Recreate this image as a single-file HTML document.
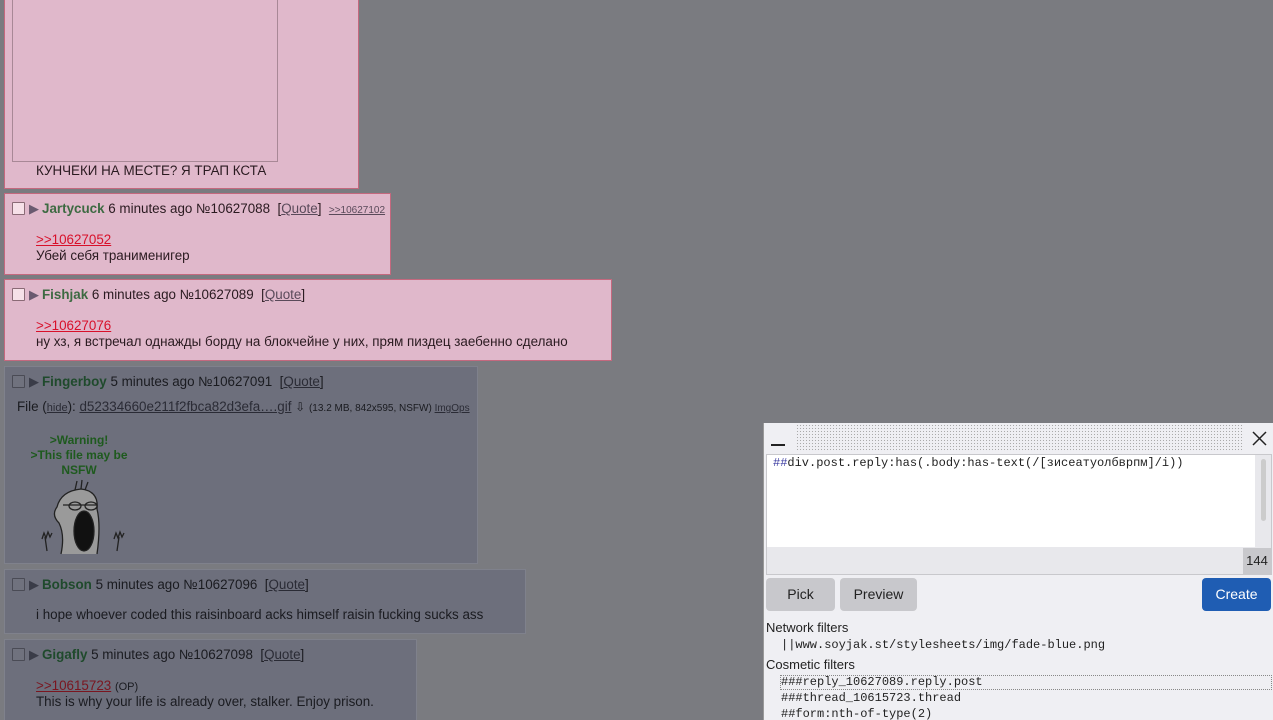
<!DOCTYPE html><html><head><meta charset="utf-8"><style>
html,body{margin:0;width:1273px;height:720px;overflow:hidden}
body{background:#7a7b80;font-family:"Liberation Sans",Arial,sans-serif;font-size:13.4px;position:relative}
.p{position:absolute;box-sizing:border-box}
.pk{background:#e0b8cb;border:1px solid #c4687e;color:#2a1a20}
.gr{background:#6d6f7c;border:1px solid #7f818c;color:#1a1b20}
.h{position:absolute;left:7px;white-space:nowrap}
.cb{display:inline-block;width:11px;height:11px;border:1px solid #8a6a76;vertical-align:-2px;margin-right:4px;background:#f6e0e8;border-radius:1px}
.gr .cb{background:#70727e;border-color:#4a4b55}
.tri{color:#6a5a70;font-size:13px;margin-right:3px}
.gr .tri{color:#3a3c48}
.nm{color:#3d6a42;font-weight:bold}
.gr .nm{color:#1f4a2c}
u{color:#5a4a5a}
.gr u{color:#2a2b35}
.ql{color:#d8102a;text-decoration:underline}
.gr .ql{color:#7a1620}
.t{position:absolute;left:31px;white-space:nowrap}
.mono{font-family:"Liberation Mono",monospace;font-size:12px}
.pn{font-size:13px}
</style></head><body>
<div class="p pk" style="left:4px;top:-2px;width:355px;height:191px">
<div style="position:absolute;left:7px;top:0;width:264px;height:162px;border:1px solid #a88896;border-top:none"></div>
<div class="t" style="top:164px">КУНЧЕКИ НА МЕСТЕ? Я ТРАП КСТА</div></div>

<div class="p pk" style="left:4px;top:193px;width:387px;height:82px">
<div class="h" style="top:7px"><span class="cb"></span><span class="tri">▶</span><span class="nm">Jartycuck</span> 6 minutes ago №10627088&nbsp; [<u>Quote</u>]&nbsp; <u style="font-size:10px">&gt;&gt;10627102</u></div>
<div class="t" style="top:38px"><span class="ql">&gt;&gt;10627052</span></div>
<div class="t" style="top:54px">Убей себя транименигер</div></div>

<div class="p pk" style="left:4px;top:279px;width:608px;height:82px">
<div class="h" style="top:7px"><span class="cb"></span><span class="tri">▶</span><span class="nm">Fishjak</span> 6 minutes ago №10627089&nbsp; [<u>Quote</u>]</div>
<div class="t" style="top:38px"><span class="ql">&gt;&gt;10627076</span></div>
<div class="t" style="top:54px">ну хз, я встречал однажды борду на блокчейне у них, прям пиздец заебенно сделано</div></div>

<div class="p gr" style="left:4px;top:366px;width:474px;height:198px">
<div class="h" style="top:7px"><span class="cb"></span><span class="tri">▶</span><span class="nm">Fingerboy</span> 5 minutes ago №10627091&nbsp; [<u>Quote</u>]</div>
<div class="h" style="top:32px;left:12px">File (<u style="font-size:11px">hide</u>): <u>d52334660e211f2fbca82d3efa….gif</u> <span style="font-size:12px">⇩</span> <span style="font-size:10px">(13.2 MB, 842x595, NSFW) <u>ImgOps</u></span></div>
<div style="position:absolute;left:14px;top:66px;width:120px;text-align:center;color:#1e5a1e;font-weight:bold;font-size:12px;line-height:15px">&gt;Warning!<br>&gt;This file may be<br>NSFW</div>
<svg style="position:absolute;left:34px;top:112px" width="86" height="76" viewBox="0 0 86 76"><g fill="none" stroke="#222" stroke-width="1.3"><path d="M22 75 Q26 56 20 44 Q12 36 18 28 Q22 12 42 10 Q60 12 58 30 Q62 46 58 75" fill="#9a9a9a"/><ellipse cx="45" cy="52" rx="10" ry="20" fill="#111"/><path d="M24 26h34"/><ellipse cx="36" cy="27" rx="6" ry="4"/><ellipse cx="52" cy="27" rx="6" ry="4"/><path d="M8 72 L6 58 M3 60l2-6 2 5 2-6 2 5 2-4M78 72 80 58M75 60l2-6 2 5 2-6 2 5 2-4M36 11 38 2 M42 10 43 1 M46 11 49 3"/></g></svg>
</div>

<div class="p gr" style="left:4px;top:569px;width:522px;height:65px">
<div class="h" style="top:7px"><span class="cb"></span><span class="tri">▶</span><span class="nm">Bobson</span> 5 minutes ago №10627096&nbsp; [<u>Quote</u>]</div>
<div class="t" style="top:37px">i hope whoever coded this raisinboard acks himself raisin fucking sucks ass</div></div>

<div class="p gr" style="left:4px;top:639px;width:413px;height:81px;border-bottom:none">
<div class="h" style="top:7px"><span class="cb"></span><span class="tri">▶</span><span class="nm">Gigafly</span> 5 minutes ago №10627098&nbsp; [<u>Quote</u>]</div>
<div class="t" style="top:38px"><span class="ql">&gt;&gt;10615723</span> <span style="font-size:11px">(OP)</span></div>
<div class="t" style="top:54px">This is why your life is already over, stalker. Enjoy prison.</div></div>

<div class="p pn" style="left:763px;top:423px;width:510px;height:297px;background:#efeff3;border-left:1px solid #999">
<div style="position:absolute;left:32px;top:1px;width:448px;height:28px;background-image:radial-gradient(#aaa 0.6px,transparent 0.8px);background-size:3px 3px"></div>
<div style="position:absolute;left:7px;top:21px;width:14px;height:1.5px;background:#222"></div>
<svg style="position:absolute;left:488px;top:8px" width="15" height="15"><path d="M1 1L14 14M14 1L1 14" stroke="#222" stroke-width="1.5"/></svg>
<div style="position:absolute;left:2px;top:31px;width:504px;height:119px;border:1px solid #c8c8cc;background:#e8e8ec">
<div style="position:absolute;left:0;top:0;width:488px;height:92px;background:#fff"></div>
<div class="mono" style="position:absolute;left:6px;top:1px;color:#222"><span style="color:#3a3aa0">##</span>div.post.reply:has(.body:has-text(/[зисеатуолбврпм]/i))</div>
<div style="position:absolute;left:494px;top:4px;width:5px;height:62px;background:#ccc;border-radius:3px"></div>
<div style="position:absolute;right:0;top:93px;width:28px;height:26px;background:#c8c8cc;text-align:center;line-height:26px;font-size:13px;color:#222">144</div></div>
<div style="position:absolute;left:2px;top:155px;width:69px;height:33px;background:#c8c8cc;border-radius:4px;text-align:center;line-height:33px;font-size:14px;color:#222">Pick</div>
<div style="position:absolute;left:76px;top:155px;width:77px;height:33px;background:#c8c8cc;border-radius:4px;text-align:center;line-height:33px;font-size:14px;color:#222">Preview</div>
<div style="position:absolute;left:438px;top:155px;width:69px;height:33px;background:#1f5db3;border-radius:4px;text-align:center;line-height:33px;font-size:14px;color:#fff">Create</div>
<div style="position:absolute;left:2px;top:197px;color:#222">Network filters</div>
<div class="mono" style="position:absolute;left:17px;top:215px;color:#222">||www.soyjak.st/stylesheets/img/fade-blue.png</div>
<div style="position:absolute;left:2px;top:234px;color:#222">Cosmetic filters</div>
<div class="mono" style="position:absolute;left:16px;top:252px;width:490px;height:13px;border:1px dotted #888;line-height:13px;color:#222">###reply_10627089.reply.post</div>
<div class="mono" style="position:absolute;left:17px;top:268px;color:#222">###thread_10615723.thread</div>
<div class="mono" style="position:absolute;left:17px;top:284px;color:#222">##form:nth-of-type(2)</div>
</div>
</body></html>
